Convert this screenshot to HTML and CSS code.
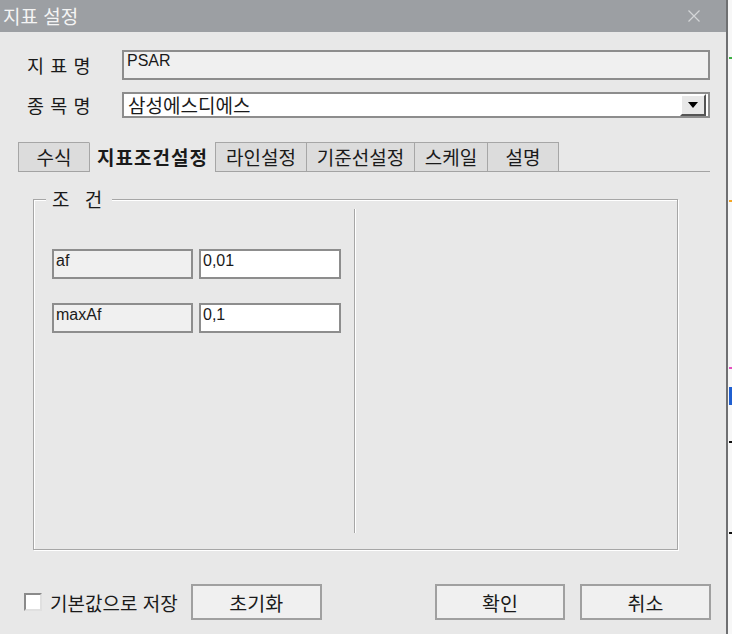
FILE: index.html
```html
<!DOCTYPE html>
<html lang="ko">
<head>
    <meta charset="UTF-8">
    <meta name="viewport" content="width=device-width, initial-scale=1.0">
    <title>지표 설정</title>
    <link rel="stylesheet" href="styles.css">
</head>
<body>
    <div class="screen">
        <div class="dialog">
            <div class="title-bar">
                <span class="title">지표 설정</span>
                <svg class="close" width="12" height="12" viewBox="0 0 12 12">
                    <path d="M0.5 0.5 L11.5 11.5 M11.5 0.5 L0.5 11.5" stroke="#d4d6d8" stroke-width="1.2"/>
                </svg>
            </div>

            <div class="content">
                <div class="field-row">
                    <div class="field-label">지 표 명</div>
                    <div class="name-box">PSAR</div>
                </div>
                <div class="field-row second">
                    <div class="field-label">종 목 명</div>
                    <div class="combo">
                        <span class="combo-text">삼성에스디에스</span>
                        <span class="combo-btn">
                            <svg width="10" height="6" viewBox="0 0 10 6"><path d="M0 0 H10 L5 6 Z" fill="#000"/></svg>
                        </span>
                    </div>
                </div>

                <div class="tabs">
                    <div class="tab w1">수식</div>
                    <div class="tab active w2">지표조건설정</div>
                    <div class="tab w3">라인설정</div>
                    <div class="tab w4">기준선설정</div>
                    <div class="tab w5">스케일</div>
                    <div class="tab w6">설명</div>
                </div>

                <div class="group">
                    <div class="group-title">조 건</div>
                    <div class="params">
                        <div class="param-row">
                            <div class="param-name">af</div>
                            <div class="param-value">0,01</div>
                        </div>
                        <div class="param-row">
                            <div class="param-name">maxAf</div>
                            <div class="param-value">0,1</div>
                        </div>
                    </div>
                    <div class="divider"></div>
                </div>

                <div class="bottom-bar">
                    <span class="checkbox"></span>
                    <span class="check-label">기본값으로 저장</span>
                    <button class="btn reset">초기화</button>
                    <button class="btn ok">확인</button>
                    <button class="btn">취소</button>
                </div>
            </div>
        </div>

        <div class="backdrop">
            <span class="mark green"></span>
            <span class="mark orange"></span>
            <span class="mark pink"></span>
            <span class="mark blue"></span>
            <span class="mark black one"></span>
            <span class="mark black two"></span>
        </div>
    </div>
</body>
</html>
```

FILE: styles.css
```css
body {
    margin: 0;
    padding: 0;
    font-family: "Noto Sans CJK KR", "Liberation Sans", sans-serif;
    color: #1a1a1a;
    background-color: #e8e8e8;
}

.screen {
    display: flex;
    width: 732px;
    height: 634px;
    overflow: hidden;
}

.dialog {
    width: 726px;
    height: 634px;
    background-color: #e8e8e8;
    border-right: 2px solid #6f7072;
    flex-shrink: 0;
}

.title-bar {
    height: 32px;
    background-color: #9c9fa3;
    display: flex;
    align-items: center;
    justify-content: space-between;
    padding: 0 26px 0 3px;
}

.title {
    color: #f4f4f4;
    font-size: 19px;
    line-height: 32px;
}

.content {
    padding: 18px 0 0 18px;
}

.field-row {
    display: flex;
    align-items: center;
}

.field-row.second {
    margin-top: 12px;
}

.field-label {
    width: 104px;
    padding-left: 9px;
    box-sizing: border-box;
    font-size: 18.5px;
    letter-spacing: 0.5px;
}

.name-box {
    width: 588px;
    height: 30px;
    box-sizing: border-box;
    border: 2px solid #8d8d8d;
    background-color: #f0f0f0;
    font-family: "Liberation Sans", sans-serif;
    font-size: 16px;
    line-height: 16px;
    padding: 1px 3px;
}

.combo {
    width: 588px;
    height: 26px;
    box-sizing: border-box;
    border: 2px solid #8d8d8d;
    background-color: #fff;
    display: flex;
    align-items: center;
    justify-content: space-between;
}

.combo-text {
    font-size: 19px;
    line-height: 22px;
    padding-left: 4px;
}

.combo-btn {
    width: 26px;
    height: 22px;
    box-sizing: border-box;
    background-color: #e8e8e8;
    border: 2px solid;
    border-color: #fff #555 #555 #fff;
    display: flex;
    align-items: center;
    justify-content: center;
    margin-right: 2px;
}

/* tab strip */
.tabs {
    display: flex;
    width: 692px;
    margin-top: 24px;
    border-bottom: 1px solid #a3a3a3;
    box-sizing: border-box;
}

.tab {
    height: 29px;
    box-sizing: border-box;
    border: 1px solid #a6a6a6;
    border-bottom: none;
    border-right: none;
    background-color: #dcdcdc;
    font-size: 19px;
    line-height: 27px;
    text-align: center;
}

.tab.w6 {
    border-right: 1px solid #a6a6a6;
}

.tab.active {
    background-color: #e8e8e8;
    font-weight: bold;
    letter-spacing: 1px;
    border-top-color: #e8e8e8;
    margin-bottom: -1px;
    height: 30px;
}

.tab.active + .tab {
    border-left-color: #a6a6a6;
}

.w1 { width: 71px; }
.w2 { width: 126px; }
.w3 { width: 91px; }
.w4 { width: 108px; }
.w5 { width: 73px; }
.w6 { width: 72px; }

/* condition group */
.group {
    position: relative;
    display: flex;
    width: 645px;
    height: 351px;
    box-sizing: border-box;
    margin: 27px 0 0 15px;
    border: 1px solid #a6a6a6;
    box-shadow: inset 1px 1px 0 #fff, 1px 1px 0 #fff;
}

.group-title {
    position: absolute;
    top: -14px;
    left: 12px;
    padding: 0 5px 0 6px;
    background-color: #e8e8e8;
    font-size: 19px;
    line-height: 26px;
    letter-spacing: 5px;
}

.params {
    width: 320px;
    padding: 49px 0 0 18px;
    box-sizing: border-box;
}

.param-row {
    display: flex;
    gap: 6px;
    margin-bottom: 24px;
}

.param-name,
.param-value {
    height: 30px;
    box-sizing: border-box;
    border: 2px solid #8d8d8d;
    font-family: "Liberation Sans", sans-serif;
    font-size: 16px;
    line-height: 18px;
    padding: 1px 2px;
}

.param-name {
    width: 141px;
    background-color: #f0f0f0;
}

.param-value {
    width: 142px;
    background-color: #fff;
}

.divider {
    width: 1px;
    height: 324px;
    margin-top: 9px;
    background-color: #a6a6a6;
    border-right: 1px solid #fff;
}

/* bottom buttons */
.bottom-bar {
    display: flex;
    align-items: center;
    width: 693px;
    margin-top: 34px;
}

.checkbox {
    width: 18px;
    height: 18px;
    box-sizing: border-box;
    margin-left: 6px;
    background-color: #fff;
    border: 2px solid;
    border-color: #8a8a8a #e0e0e0 #e0e0e0 #8a8a8a;
}

.check-label {
    margin-left: 8px;
    font-size: 19px;
}

.btn {
    width: 131px;
    height: 36px;
    box-sizing: border-box;
    background-color: #f0f0f0;
    border: 2px solid #a0a0a0;
    font-family: "Noto Sans CJK KR", sans-serif;
    font-size: 19.5px;
    color: #1a1a1a;
    padding: 0;
    margin-left: 15px;
}

.btn.reset {
    margin-left: 13px;
}

.btn.ok {
    width: 130px;
    margin-left: auto;
}

/* other window behind the dialog */
.backdrop {
    position: relative;
    flex: 1;
    background-color: #f7f7f7;
}

.mark {
    position: absolute;
    left: 1px;
    width: 3px;
    height: 2px;
}

.green { top: 57px; background-color: #3cb043; }
.orange { top: 200px; background-color: #f5a623; }
.pink { top: 367px; background-color: #e64fc0; }
.blue { top: 387px; height: 18px; background-color: #1f5fd1; }
.black.one { top: 441px; background-color: #111; }
.black.two { top: 532px; background-color: #111; }
```
